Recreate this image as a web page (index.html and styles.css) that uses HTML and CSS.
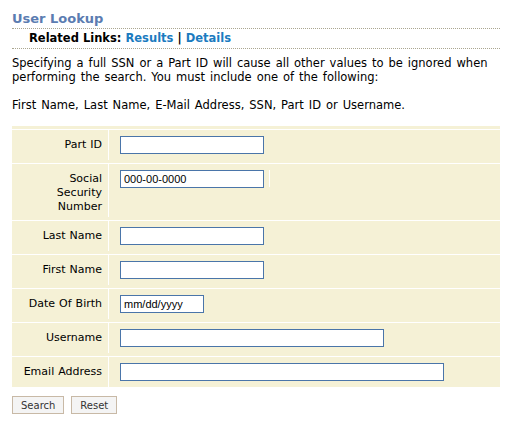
FILE: index.html
```html
<!DOCTYPE html>
<html lang="en">
<head>
  <meta charset="UTF-8">
  <meta name="viewport" content="width=device-width, initial-scale=1.0">
  <title>User Lookup</title>
  <link rel="stylesheet" href="styles.css">
</head>
<body>

  <h1 class="title">User Lookup</h1>

  <div class="related">
    Related Links: <a href="#">Results</a> | <a href="#">Details</a>
  </div>

  <p class="intro">Specifying a full SSN or a Part ID will cause all other values to be ignored when performing the search. You must include one of the following:</p>
  <p class="intro">First Name, Last Name, E-Mail Address, SSN, Part ID or Username.</p>

  <form class="lookup">
    <div class="fields">
      <div class="row">
        <label class="label" for="partid">Part ID</label>
        <div class="field"><input type="text" id="partid" class="w-short"></div>
      </div>
      <div class="row">
        <label class="label" for="ssn">Social Security Number</label>
        <div class="field"><input type="text" id="ssn" class="w-short" value="000-00-0000"><span class="mark"></span></div>
      </div>
      <div class="row">
        <label class="label" for="lname">Last Name</label>
        <div class="field"><input type="text" id="lname" class="w-short"></div>
      </div>
      <div class="row">
        <label class="label" for="fname">First Name</label>
        <div class="field"><input type="text" id="fname" class="w-short"></div>
      </div>
      <div class="row">
        <label class="label" for="dob">Date Of Birth</label>
        <div class="field"><input type="text" id="dob" class="w-date" value="mm/dd/yyyy"></div>
      </div>
      <div class="row">
        <label class="label" for="user">Username</label>
        <div class="field"><input type="text" id="user" class="w-mid"></div>
      </div>
      <div class="row">
        <label class="label" for="email">Email Address</label>
        <div class="field"><input type="text" id="email" class="w-long"></div>
      </div>
    </div>

    <div class="buttons">
      <button class="btn" type="submit">Search</button>
      <button class="btn" type="reset">Reset</button>
    </div>
  </form>

</body>
</html>
```

FILE: styles.css
```css
* {
  margin: 0;
  padding: 0;
  box-sizing: border-box;
}

body {
  font-family: "DejaVu Sans", Verdana, sans-serif;
  font-size: 11px;
  line-height: 14px;
  color: #000;
  padding: 11px 8px 0 12px;
}

.title {
  font-size: 13px;
  line-height: 15px;
  color: #5b7cb1;
  padding-bottom: 2px;
  border-bottom: 1px dotted #aaa690;
}

.related {
  font-size: 11.5px;
  font-weight: bold;
  padding: 2px 0 3px 17px;
  border-bottom: 1px dotted #aaa690;
}

.related a {
  color: #1b7bbf;
  text-decoration: none;
}

.intro {
  font-size: 11.5px;
  word-spacing: 1.3px;
  margin-bottom: 14px;
}

.intro:first-of-type {
  margin-top: 7px;
}

.fields {
  background: #f5f1d6;
  padding-top: 3px;
}

.row {
  display: flex;
  border-top: 1px solid #fff;
  padding-bottom: 3px;
}

.row:last-child {
  padding-bottom: 0;
}

.label {
  width: 97px;
  padding: 8px 6px 3px 10px;
  text-align: right;
  border-right: 1px solid #fff;
  word-spacing: 0.5px;
}

.field {
  padding: 6px 0 6px 11px;
}

.field input {
  height: 18px;
  border: 1px solid #4a75a9;
  padding: 0 3px;
  font-family: "Liberation Sans", Arial, sans-serif;
  font-size: 11px;
  color: #000;
  vertical-align: top;
}

.mark {
  display: inline-block;
  height: 17px;
  margin-left: 5px;
  border-left: 1px solid #fff;
  vertical-align: top;
}

.w-short { width: 144px; }
.w-date { width: 84px; }
.w-mid { width: 264px; }
.w-long { width: 324px; }

.buttons {
  margin-top: 9px;
  display: flex;
  gap: 7px;
}

.btn {
  height: 18px;
  padding: 0 8px;
  background: #f4f4f4;
  border: 1px solid #c8b9a6;
  font-family: "DejaVu Sans", Verdana, sans-serif;
  font-size: 10px;
  color: #333;
}
```
